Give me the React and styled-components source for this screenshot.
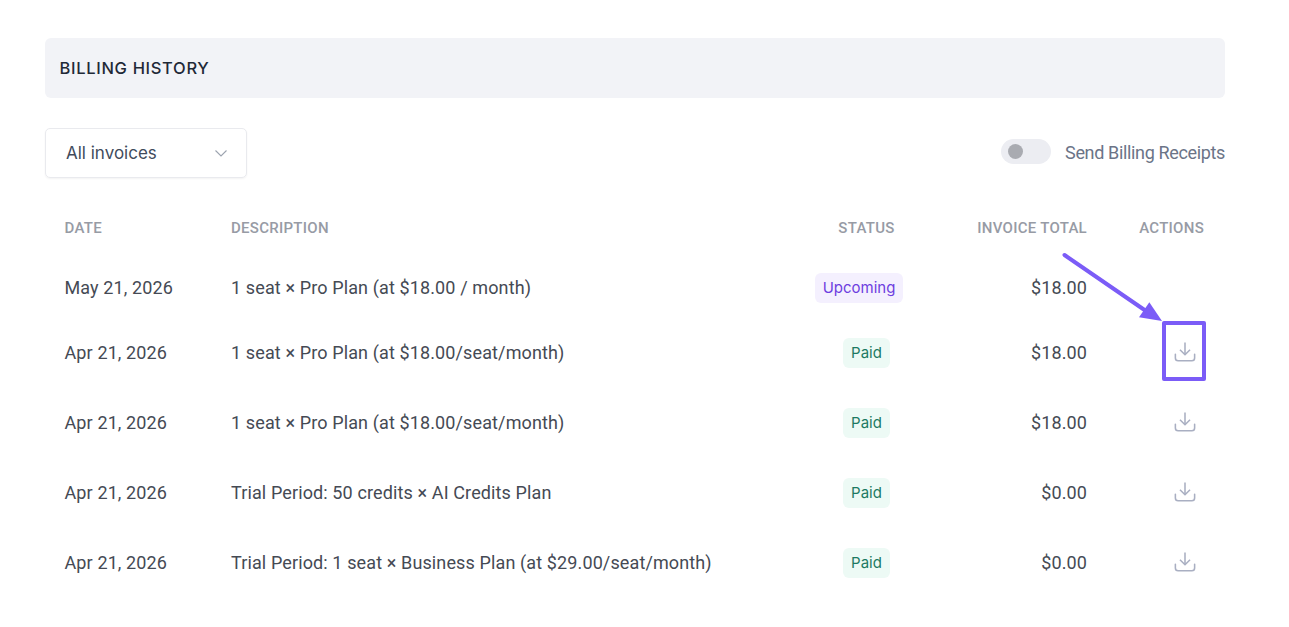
import React from "react";
import styled, { createGlobalStyle } from "styled-components";

const Global = createGlobalStyle`
  html, body { margin: 0; padding: 0; background: #fff; }
  body { font-family: Roboto, "Liberation Sans", sans-serif; }
`;
const Page = styled.div`
  position: relative;
  width: 1289px;
  height: 627px;
  padding: 38px 0 0 45px;
  box-sizing: border-box;
  overflow: hidden;
`;
const Content = styled.div`
  width: 1180px;
  display: flex;
  flex-direction: column;
`;
const Header = styled.div`
  height: 60px;
  background: #f2f3f7;
  border-radius: 6px;
  display: flex;
  align-items: center;
  padding-left: 14.5px;
  font-family: Inter, sans-serif;
  font-size: 16.5px;
  font-weight: 500;
  letter-spacing: 0.68px;
  color: #1f2937;
`;
const Toolbar = styled.div`
  margin-top: 30px;
  height: 50px;
  display: flex;
  align-items: center;
  justify-content: space-between;
`;
const Select = styled.div`
  width: 202px;
  height: 50px;
  box-sizing: border-box;
  border: 1px solid #e9eaee;
  border-radius: 5px;
  box-shadow: 0 1px 2px rgba(0, 0, 0, 0.05);
  display: flex;
  align-items: center;
  justify-content: space-between;
  padding: 0 18px 0 20px;
  font-family: Inter, sans-serif;
  font-size: 17px;
  color: #414b5c;
`;
const ToggleLabel = styled.label`
  display: flex;
  align-items: center;
  gap: 14px;
  padding-bottom: 2px;
  font-size: 18px;
  letter-spacing: -0.35px;
  color: #6b7487;
`;
const Toggle = styled.span`
  width: 50px;
  height: 25px;
  margin-bottom: 2px;
  border-radius: 13px;
  background: #ecedf2;
  display: flex;
  align-items: center;
  padding-left: 7px;
  box-sizing: border-box;
`;
const Knob = styled.span`
  width: 15px;
  height: 15px;
  border-radius: 50%;
  background: #a9abb1;
`;
const Row = styled.div`
  display: grid;
  grid-template-columns: 166.5px 1fr 120px 161px 118px;
  align-items: center;
  height: ${(p) => p.$h}px;
  padding: 0 20px 0 19.5px;
  font-size: 18px;
  letter-spacing: 0.12px;
  color: #454a54;
`;
const HeadRow = styled(Row)`
  margin-top: 20px;
  font-size: 15px;
  font-weight: 500;
  letter-spacing: 0.28px;
  color: #979ba5;
`;
const StatusHead = styled.div`
  display: flex;
  justify-content: center;
  padding-left: 1px;
`;
const StatusCell = styled(StatusHead)`
  padding-top: 2px;
`;
const Right = styled.div`
  text-align: right;
`;
const ActionsHead = styled(Right)`
  padding-right: 1px;
`;
const Badge = styled.span`
  height: 30px;
  box-sizing: border-box;
  display: inline-flex;
  align-items: center;
  padding: 0 8px 2px;
  margin-right: ${(p) => (p.$kind === "paid" ? 0 : 15)}px;
  border-radius: 6px;
  font-size: 15px;
  font-family: Inter, sans-serif;
  letter-spacing: 0;
  color: ${(p) => (p.$kind === "paid" ? "#1d7a63" : "#6d3ee0")};
  background: ${(p) => (p.$kind === "paid" ? "#edfaf5" : "#f4f0fe")};
`;
const ActionCell = styled.div`
  display: flex;
  justify-content: flex-end;
  padding-right: 9.5px;
`;
const IconBox = styled.span`
  position: relative;
  display: flex;
  width: 22px;
  height: 22px;
`;
const Highlight = styled.span`
  position: absolute;
  left: -11.5px;
  top: -20px;
  width: 44px;
  height: 60px;
  box-sizing: border-box;
  border: 4px solid #7b5cf7;
  border-radius: 2px;
`;
const Arrow = styled.svg`
  position: absolute;
  left: 1050px;
  top: 245px;
`;

const Chevron = () => (
  <svg width="14" height="14" viewBox="0 0 14 14" fill="none">
    <path d="M1.5 4.5 7 10l5.5-5.5" stroke="#9ca3af" strokeWidth="1.1" />
  </svg>
);
const Download = () => (
  <svg width="22" height="22" viewBox="0 0 24 24" fill="none" stroke="#a9afc2" strokeWidth="1.7">
    <path d="M12 1.5V15" />
    <path d="M6.5 9.5 12 15l5.5-5.5" />
    <path d="M1.5 14.5v4a3 3 0 0 0 3 3h15a3 3 0 0 0 3-3v-4" strokeLinecap="round" />
  </svg>
);

const rows = [
  ["May 21, 2026", "1 seat × Pro Plan (at $18.00 / month)", "Upcoming", "$18.00", false, 60],
  ["Apr 21, 2026", "1 seat × Pro Plan (at $18.00/seat/month)", "Paid", "$18.00", true, 70],
  ["Apr 21, 2026", "1 seat × Pro Plan (at $18.00/seat/month)", "Paid", "$18.00", true, 70],
  ["Apr 21, 2026", "Trial Period: 50 credits × AI Credits Plan", "Paid", "$0.00", true, 70],
  ["Apr 21, 2026", "Trial Period: 1 seat × Business Plan (at $29.00/seat/month)", "Paid", "$0.00", true, 70],
];

export default function App() {
  return (
    <Page>
      <Global />
      <Content>
        <Header>BILLING HISTORY</Header>
        <Toolbar>
          <Select>
            All invoices
            <Chevron />
          </Select>
          <ToggleLabel>
            <Toggle>
              <Knob />
            </Toggle>
            Send Billing Receipts
          </ToggleLabel>
        </Toolbar>
        <HeadRow $h={59}>
          <div>DATE</div>
          <div>DESCRIPTION</div>
          <StatusHead>STATUS</StatusHead>
          <Right>INVOICE TOTAL</Right>
          <ActionsHead>ACTIONS</ActionsHead>
        </HeadRow>
        {rows.map(([date, desc, status, total, dl, h], i) => (
          <Row key={i} $h={h}>
            <div>{date}</div>
            <div>{desc}</div>
            <StatusCell>
              <Badge $kind={status === "Paid" ? "paid" : "upcoming"}>{status}</Badge>
            </StatusCell>
            <Right>{total}</Right>
            <ActionCell>
              {dl && (
                <IconBox>
                  <Download />
                  {i === 1 && <Highlight />}
                </IconBox>
              )}
            </ActionCell>
          </Row>
        ))}
      </Content>
      <Arrow width="120" height="85" viewBox="0 0 120 85" fill="none">
        <path d="M14.5 10 96 66" stroke="#7b5cf7" strokeWidth="4" strokeLinecap="round" />
        <path d="M112 76 89 72.3 99.3 57.3Z" fill="#7b5cf7" />
      </Arrow>
    </Page>
  );
}
